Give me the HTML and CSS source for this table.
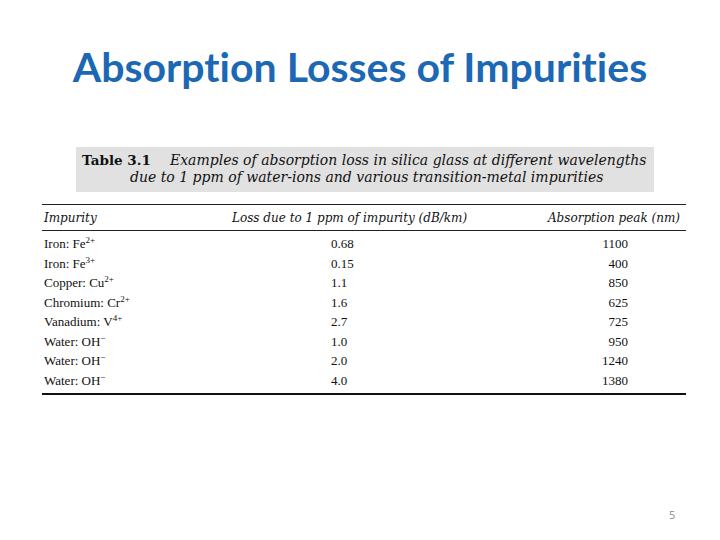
FILE: index.html
```html
<!DOCTYPE html>
<html>
<head>
<meta charset="utf-8">
<link rel="stylesheet" href="styles.css">
</head>
<body>
<div class="slide">
  <h1 class="title">Absorption Losses of Impurities</h1>
  <div class="caption">
    <div class="cline1"><span class="label">Table 3.1</span><span class="ctext">Examples of absorption loss in silica glass at different wavelengths</span></div>
    <div class="cline2"><span class="ctext">due to 1 ppm of water-ions and various transition-metal impurities</span></div>
  </div>
  <table class="data">
    <thead>
      <tr><th class="c1">Impurity</th><th class="c2">Loss due to 1 ppm of impurity (dB/km)</th><th class="c3">Absorption peak (nm)</th></tr>
    </thead>
    <tbody>
      <tr><td class="c1">Iron: Fe<sup>2+</sup></td><td class="c2">0.68</td><td class="c3">1100</td></tr>
      <tr><td class="c1">Iron: Fe<sup>3+</sup></td><td class="c2">0.15</td><td class="c3">400</td></tr>
      <tr><td class="c1">Copper: Cu<sup>2+</sup></td><td class="c2">1.1</td><td class="c3">850</td></tr>
      <tr><td class="c1">Chromium: Cr<sup>2+</sup></td><td class="c2">1.6</td><td class="c3">625</td></tr>
      <tr><td class="c1">Vanadium: V<sup>4+</sup></td><td class="c2">2.7</td><td class="c3">725</td></tr>
      <tr><td class="c1">Water: OH<sup>−</sup></td><td class="c2">1.0</td><td class="c3">950</td></tr>
      <tr><td class="c1">Water: OH<sup>−</sup></td><td class="c2">2.0</td><td class="c3">1240</td></tr>
      <tr><td class="c1">Water: OH<sup>−</sup></td><td class="c2">4.0</td><td class="c3">1380</td></tr>
    </tbody>
  </table>
  <div class="pagenum">5</div>
</div>
</body>
</html>
```
FILE: styles.css
```css
html, body {
  margin: 0;
  padding: 0;
  background: #ffffff;
}
.slide {
  width: 720px;
  height: 540px;
  display: flex;
  flex-direction: column;
  position: relative;
  overflow: hidden;
}
.title {
  margin: 41px 0 0 0;
  height: 52px;
  line-height: 52px;
  text-align: center;
  font-family: Lato, "Open Sans", sans-serif;
  font-weight: bold;
  font-size: 41px;
  color: #1c68b4;
  font-variant-ligatures: none;
  font-feature-settings: "liga" 0, "clig" 0;
}
.caption {
  margin: 54px 0 0 76px;
  width: 578px;
  height: 45px;
  box-sizing: border-box;
  background: #e1e1e1;
  padding-top: 5px;
  font-family: "DejaVu Serif", "Liberation Serif", serif;
  font-size: 14px;
  line-height: 17px;
  color: #111;
}
.cline1 {
  display: flex;
  padding-left: 6px;
}
.label {
  font-weight: bold;
  font-size: 13.5px;
  width: 88px;
}
.ctext {
  font-style: italic;
}
.cline2 {
  padding-left: 54px;
}
.data {
  margin: 12px 0 0 42px;
  width: 644px;
  border-collapse: collapse;
  font-family: "Liberation Serif", serif;
  font-size: 13px;
  color: #111;
  border-top: 1px solid #222;
  border-bottom: 2px solid #111;
}
.data th {
  font-family: "DejaVu Serif", "Liberation Serif", serif;
  font-weight: normal;
  font-style: italic;
  font-size: 12px;
  height: 25px;
  padding: 0;
  border-bottom: 1px solid #222;
  text-align: left;
}
.data td {
  height: 19.5px;
  padding: 0;
  line-height: 15px;
}
.data tbody tr:first-child td {
  padding-top: 3px;
}
.data tbody tr:last-child td {
  padding-bottom: 3px;
}
.c1 {
  width: 188px;
  padding-left: 2px !important;
}
.data td.c2 {
  padding-left: 99px;
}
.data th.c3 {
  text-align: right;
  padding-right: 6px;
}
.data td.c3 {
  text-align: right;
  padding-right: 58px;
}
sup {
  font-size: 9px;
  line-height: 0;
  vertical-align: 5px;
}
.pagenum {
  position: absolute;
  left: 669px;
  top: 507px;
  font-family: "Open Sans", sans-serif;
  font-size: 11px;
  color: #8a8a8a;
}
```
